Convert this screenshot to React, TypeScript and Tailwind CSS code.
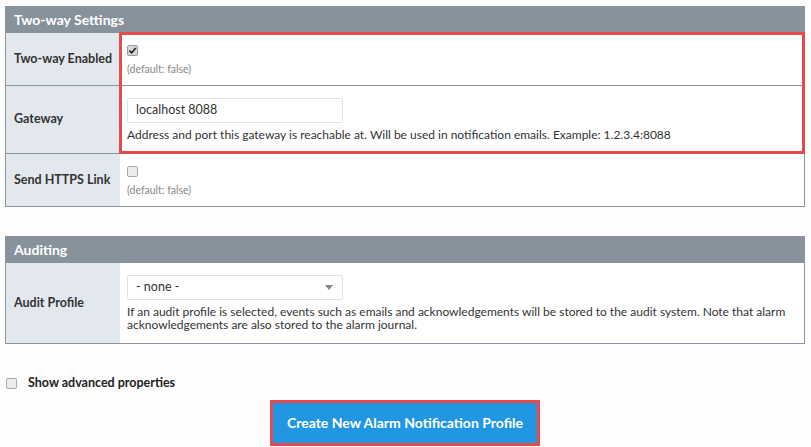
import type { ReactNode } from 'react'

const font = { fontFamily: 'Lato, "Open Sans", sans-serif' }

function Check({ checked }: { checked?: boolean }) {
    return (
        <span
            className={
                'flex h-[11px] w-[11px] items-center justify-center rounded-[2px] border ' +
                (checked ? 'border-[#9a9a9a] bg-[#d6d6d6]' : 'border-[#a9a9a9] bg-[#ececec]')
            }
        >
            {checked && (
                <svg viewBox="0 0 10 10" className="h-[9px] w-[9px]">
                    <path d="M1.5 5.2 L4 7.6 L8.6 2.2" fill="none" stroke="#222" strokeWidth="1.8" />
                </svg>
            )}
        </span>
    )
}

function Row({ label, children, first }: { label: string; children: ReactNode; first?: boolean }) {
    return (
        <div className={'grid grid-cols-[114px_1fr] ' + (first ? '' : 'border-t border-[#8a949e]')}>
            <div className="flex items-center bg-[#e2e8ee] pl-[8px] text-[12.5px] font-bold text-[#333]">{label}</div>
            <div className="bg-white pl-[7px] pr-2">{children}</div>
        </div>
    )
}

function Section({ title, children }: { title: string; children: ReactNode }) {
    return (
        <div className="border border-t-0 border-[#8a949e]">
            <div className="flex h-[27px] items-center bg-[#87929c] pl-[8px] text-[14px] font-bold text-white">{title}</div>
            {children}
        </div>
    )
}

export default function App() {
    return (
        <div className="min-h-screen bg-[#fdfdfd] px-[5px] pt-[6px] text-[#333]" style={font}>
            <div className="relative w-[800px]">
                <Section title="Two-way Settings">
                    <Row label="Two-way Enabled" first>
                        <div className="flex h-[52px] flex-col pt-[12px]">
                            <Check checked />
                            <span className="mt-[6px] text-[10.5px] text-[#888]">(default: false)</span>
                        </div>
                    </Row>
                    <Row label="Gateway">
                        <div className="flex h-[67px] flex-col pt-[12px]">
                            <div className="flex h-[25px] w-[216px] items-center rounded-[2px] border border-[#dde2e6] bg-white pl-[8px] text-[12.5px] text-[#333]">
                                localhost 8088
                            </div>
                            <span className="mt-[3px] text-[12px] text-[#333]">
                                Address and port this gateway is reachable at. Will be used in notification emails. Example: 1.2.3.4:8088
                            </span>
                        </div>
                    </Row>
                    <Row label="Send HTTPS Link">
                        <div className="flex h-[52px] flex-col pt-[12px]">
                            <Check />
                            <span className="mt-[6px] text-[10.5px] text-[#888]">(default: false)</span>
                        </div>
                    </Row>
                </Section>

                {/* annotation box over the first two rows */}
                <div className="pointer-events-none absolute left-[114px] top-[26px] h-[122px] w-[686px] border-[3px] border-[#e64a4a]" />

                <div className="mt-[29px]">
                    <Section title="Auditing">
                        <Row label="Audit Profile" first>
                            <div className="flex h-[80px] flex-col pt-[12px]">
                                <div className="flex h-[25px] w-[216px] items-center justify-between rounded-[2px] border border-[#dde2e6] bg-white pl-[8px] pr-[9px] text-[12.5px] text-[#333]">
                                    <span>- none -</span>
                                    <svg viewBox="0 0 8 5" className="h-[5px] w-[8px]">
                                        <path d="M0 0 H8 L4 5 Z" fill="#888" />
                                    </svg>
                                </div>
                                <p className="mt-[5px] text-[12px] leading-[13px] text-[#333]">
                                    If an audit profile is selected, events such as emails and acknowledgements will be stored to the audit system. Note that alarm acknowledgements are also stored to the alarm journal.
                                </p>
                            </div>
                        </Row>
                    </Section>
                </div>

                <div className="mt-[30px] flex items-center gap-[11px] pl-[1px]">
                    <Check />
                    <span className="text-[12.5px] font-bold text-[#222]">Show advanced properties</span>
                </div>

                <div className="mt-[7px] flex justify-center">
                    <div className="border-[3px] border-[#e64a4a]">
                        <button className="h-[40px] w-[264px] bg-[#2196e3] text-[14px] font-bold text-white">
                            Create New Alarm Notification Profile
                        </button>
                    </div>
                </div>
            </div>
        </div>
    )
}
